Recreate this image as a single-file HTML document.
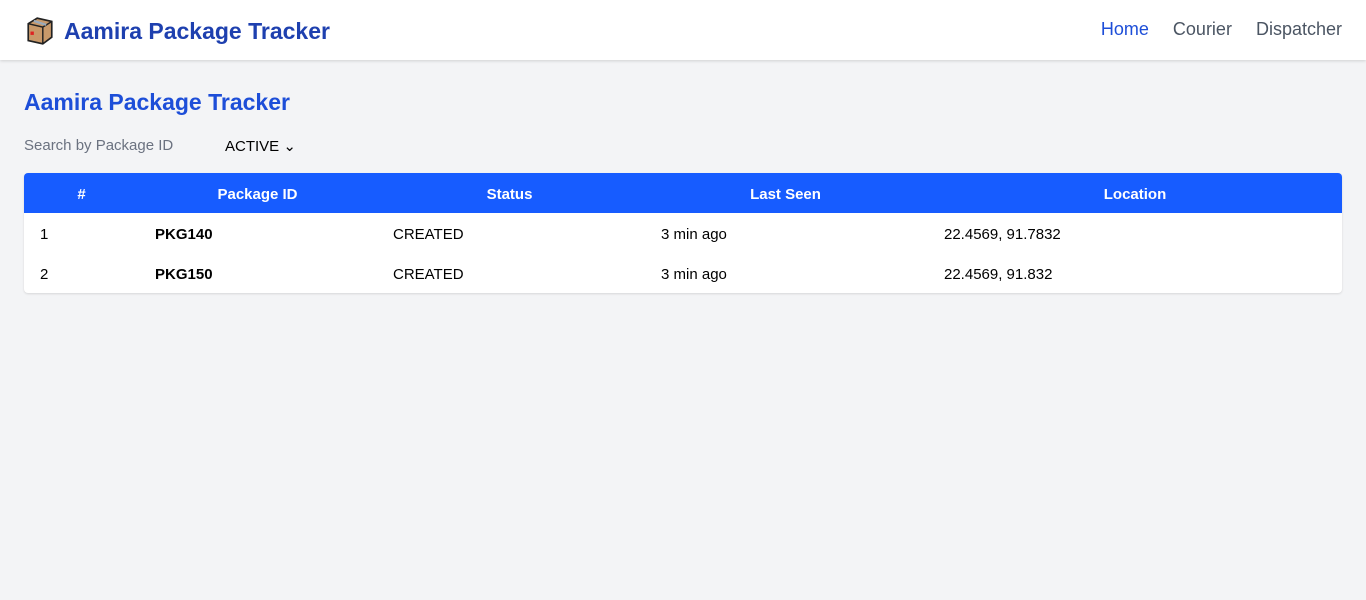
<!DOCTYPE html><html><head><style>
body{margin:0;background:#f3f4f6;font-family:"Liberation Sans",sans-serif;width:1366px;height:600px;overflow:hidden}
nav{height:60px;background:#fff;box-shadow:0 1px 3px rgba(0,0,0,.15);position:relative}
.brand{position:absolute;left:26px;top:17px;font-size:23px;font-weight:bold;color:#1e40af;display:flex;align-items:center}
.box{width:28px;height:28px;margin-right:10px}
.links{position:absolute;right:24px;top:19px;font-size:18px;color:#4b5563}
.links span{margin-left:24px}
h1{position:absolute;left:24px;top:89px;margin:0;font-size:23px;color:#1d4ed8}
.search{position:absolute;left:24px;top:137px;font-size:15px;color:#6b7280}
.sel{position:absolute;left:225px;top:137px;font-size:15px;color:#000}
.tbl{position:absolute;left:24px;top:173px;width:1318px;background:#fff;border-radius:4px;box-shadow:0 1px 2px rgba(0,0,0,.12);overflow:hidden;font-size:15px}
.r{display:flex;height:40px;line-height:44px;overflow:hidden}
.h{background:#175cff;color:#fff;font-weight:bold;text-align:center}
.r div{flex:none;box-sizing:border-box}
.c1{width:115px}.c2{width:237px}.c3{width:267px}.c4{width:285px}.c5{width:414px}
.d .c1{padding-left:16px}.d .c2{padding-left:16px;font-weight:bold}.d .c3{padding-left:17px}.d .c4{padding-left:18px}.d .c5{padding-left:16px}
</style></head><body>
<nav><div class="brand"><svg class="box" viewBox="0 0 25 25"><path d="M2 6L10 1L23 4L23 18L15 24L2 21Z" fill="#c8996a" stroke="#222" stroke-width="1.5"/><path d="M2 6L15 9L23 4M15 9L15 24" stroke="#222" stroke-width="1.3" fill="none"/><path d="M7 3.5L18 7" stroke="#9ab" stroke-width="2"/><rect x="4" y="13" width="3" height="3" fill="#d22"/></svg>Aamira Package Tracker</div>
<div class="links"><span style="color:#1d4ed8">Home</span><span>Courier</span><span>Dispatcher</span></div></nav>
<h1>Aamira Package Tracker</h1>
<div class="search">Search by Package ID</div>
<div class="sel">ACTIVE ⌄</div>
<div class="tbl">
<div class="r h"><div class="c1">#</div><div class="c2">Package ID</div><div class="c3">Status</div><div class="c4">Last Seen</div><div class="c5">Location</div></div>
<div class="r d"><div class="c1">1</div><div class="c2">PKG140</div><div class="c3">CREATED</div><div class="c4">3 min ago</div><div class="c5">22.4569, 91.7832</div></div>
<div class="r d"><div class="c1">2</div><div class="c2">PKG150</div><div class="c3">CREATED</div><div class="c4">3 min ago</div><div class="c5">22.4569, 91.832</div></div>
</div>
</body></html>
